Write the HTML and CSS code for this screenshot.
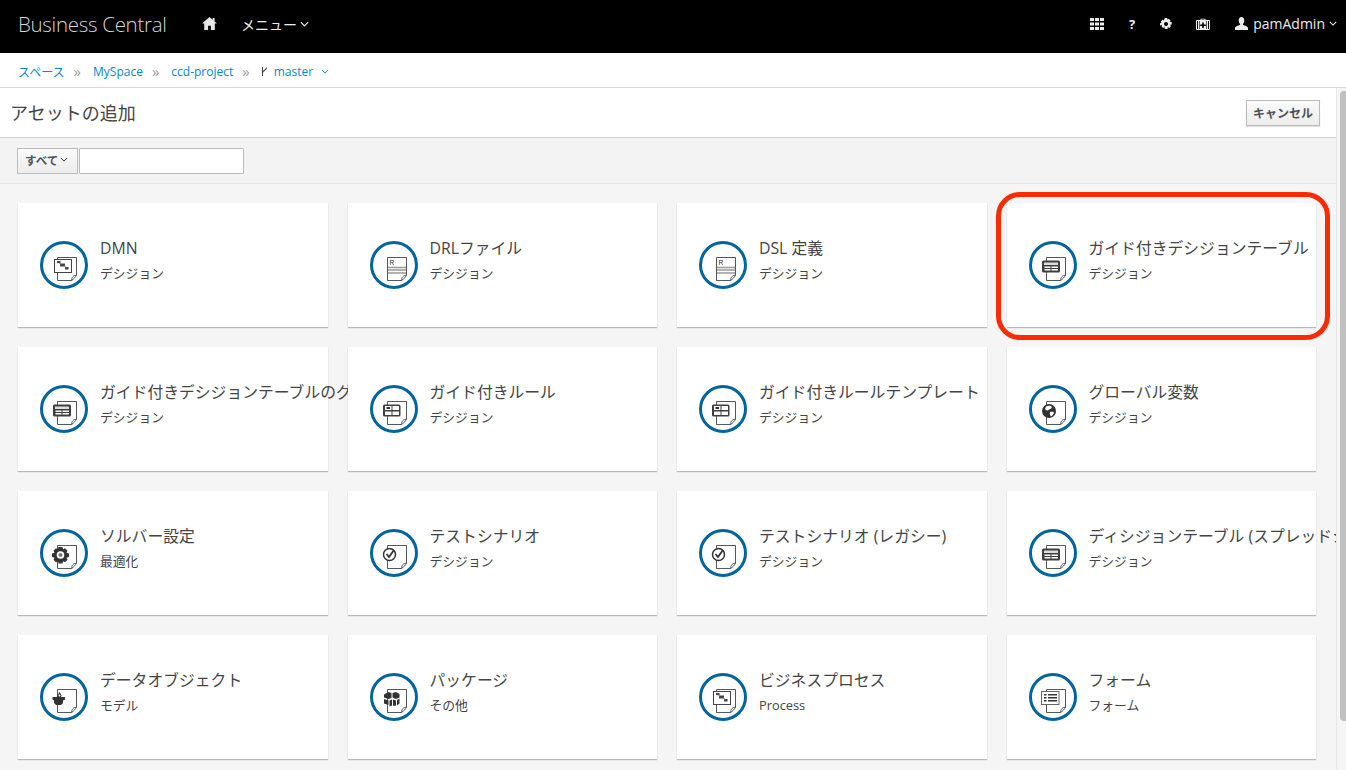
FILE: index.html
```html
<!DOCTYPE html>
<html lang="ja">
<head>
<meta charset="utf-8">
<title>Business Central</title>
<link rel="stylesheet" href="styles.css">
</head>
<body>
<svg class="defs" width="0" height="0" aria-hidden="true">
  <defs>
    <symbol id="doc" viewBox="0 0 48 48">
      <circle cx="24" cy="24" r="22.5" fill="#fff" stroke="#00659c" stroke-width="3"/>
      <path d="M17.500 16.500H36.500V34L31.500 39.500H17.500Z" fill="#fff" stroke="#555" stroke-width="1"/>
      <path d="M31.500 39.500C31.800 36.500 32.800 34.500 36.500 34.200C35.500 36 34 38 31.500 39.500Z" fill="#fff" stroke="#555" stroke-width="1"/>
    </symbol>
    <symbol id="i-flow" viewBox="0 0 48 48">
      <use href="#doc"/>
      <rect x="14.500" y="18.500" width="17" height="13" fill="#fff" stroke="#444"/>
      <path d="M17 20h3.500v2H17zM20 22.500h5v3h-5zM25 26h3.500v2.500H25z" fill="#444"/>
      <path d="M19 22l2 1M24.500 25l2 1.500" stroke="#888" stroke-width="1"/>
    </symbol>
    <symbol id="i-rule" viewBox="0 0 48 48">
      <use href="#doc"/>
      <text x="19.500" y="23.500" class="rmark">R</text>
      <path d="M18 26.500h18M18 29h18M18 32h18" stroke="#999" stroke-width="1.500"/>
    </symbol>
    <symbol id="i-table" viewBox="0 0 48 48">
      <use href="#doc"/>
      <rect x="13" y="19.500" width="18" height="12" rx="1.500" fill="#3f3f3f"/>
      <rect x="15" y="21.500" width="14" height="2.500" fill="#ddd"/>
      <path d="M15.500 25.500h6V27h-6zM22.500 25.500h6.500V27h-6.500zM15.500 28h6v1.500h-6zM22.500 28h6.500v1.500h-6.500z" fill="#fff"/>
    </symbol>
    <symbol id="i-guided" viewBox="0 0 48 48">
      <use href="#doc"/>
      <rect x="13" y="19.500" width="17.500" height="12" rx="1.500" fill="#3f3f3f"/>
      <path d="M15 21h6.500v4h-6.500zM22.500 21h6.500v4h-6.500zM15 26.500h6.500v3.500h-6.500zM22.500 26.500h6.500v3.500h-6.500z" fill="#fff"/>
      <path d="M16.500 22h3.500v2h-3.500z" fill="#333"/>
    </symbol>
    <symbol id="i-globe" viewBox="0 0 48 48">
      <use href="#doc"/>
      <circle cx="20" cy="26" r="7" fill="#333"/>
      <path d="M17 21.500c2-1 5-1 6 .5c-1 1.500-1 2-3 2.500c-1 1.500-3 1-4-.5zM21 27c2-.5 4 0 4 1c-1 2-2 3-3 3.500c-1-1-1.500-3-1-4.500z" fill="#fff"/>
    </symbol>
    <symbol id="i-gear" viewBox="0 0 48 48">
      <use href="#doc"/>
      <path d="M18.500 18h4l.5 2.200 2-.9 2.500 2.500-1 2 2.500.7v3.500l-2.500.7 1 2-2.500 2.500-2-1-.5 2.300h-4l-.5-2.300-2 1-2.500-2.500 1-2-2.500-.7V24.500l2.500-.7-1-2 2.500-2.500 2 .9z" fill="#333"/>
      <circle cx="20.500" cy="26" r="3.800" fill="#fff"/>
      <circle cx="20.500" cy="26" r="2" fill="#777"/>
    </symbol>
    <symbol id="i-check" viewBox="0 0 48 48">
      <use href="#doc"/>
      <circle cx="19.500" cy="25.500" r="6" fill="#fff" stroke="#333" stroke-width="1.500"/>
      <path d="M16.500 25l2.500 3 5-7" fill="none" stroke="#333" stroke-width="1.800"/>
    </symbol>
    <symbol id="i-data" viewBox="0 0 48 48">
      <use href="#doc"/>
      <path d="M19.500 19l2.200 3.500-.8 1.500h4.100v2.500l-2 1v2.500l-2 2h-5l-2-2V27.500l-1.500-1V24h4.200l.8-1.500z" fill="#333"/>
      <circle cx="19.500" cy="22.500" r="1" fill="#fff"/>
    </symbol>
    <symbol id="i-pack" viewBox="0 0 48 48">
      <use href="#doc"/>
      <path d="M14 21.500l4.500-2.500 3 1v5l-3 1-4.500-1.500zM22.500 20l3.500-1 3.500 2v3.500l-3.500 1.500-3.500-1.500zM14 26l4.500 1.500v4.500l-4.500-1.500zM19.500 27.500l2.500-1v6l-2.500 1zM23 26.500l3 1v5l-3 .5zM27 27l2.500-1.500v5l-2.500 2z" fill="#333"/>
    </symbol>
    <symbol id="i-form" viewBox="0 0 48 48">
      <use href="#doc"/>
      <rect x="12.500" y="18.500" width="17.500" height="13" fill="#fff" stroke="#666"/>
      <path d="M19 21h9v1.500h-9zM19 24h9v1.500h-9zM19 27h9v1.500h-9zM15 21h2.500v1.500H15zM15 24h2.500v1.500H15zM15 27h2.500v1.500H15z" fill="#333"/>
    </symbol>
  </defs>
</svg>

<div class="page">
  <nav class="topnav">
    <span class="brand">Business Central</span>
    <svg class="home" viewBox="0 0 16 14" width="15" height="13"><path d="M8 0L0 7h2.300v7h4.200V9.500h3V14h4.200V7H16L13.500 4.800V1h-2v2z" fill="#e6e6e6"/></svg>
    <span class="menu">メニュー<svg class="chev" viewBox="0 0 10 6" width="9" height="6"><path d="M1 1l4 4 4-4" fill="none" stroke="currentColor" stroke-width="1.300"/></svg></span>
    <div class="nav-right">
      <svg class="nav-ic ic-grid" viewBox="0 0 14 12" width="14" height="12"><path d="M0 0h4v3H0zM5 0h4v3H5zM10 0h4v3h-4zM0 4.500h4v3H0zM5 4.500h4v3H5zM10 4.500h4v3h-4zM0 9h4v3H0zM5 9h4v3H5zM10 9h4v3h-4z" fill="#ececec"/></svg>
      <span class="help">?</span>
      <svg class="nav-ic ic-cog" viewBox="0 0 12 12" width="12" height="12"><path d="M4.800 0h2.400l.3 1.500 1.300-.8 1.700 1.700-.8 1.300 2 .3v2.400l-1.600.4.800 1.400-1.700 1.700-1.400-.8-.3 1.900H4.800l-.4-1.900-1.300.8-1.700-1.700.8-1.400L0 7.600V5.200l1.600-.4-.8-1.300 1.700-1.700 1.300.8z" fill="#ececec" fill-rule="evenodd"/><circle cx="6" cy="6" r="2" fill="#000"/></svg>
      <svg class="nav-ic ic-case" viewBox="0 0 14 12" width="14" height="12"><path d="M4.500 2V.8h5V2H13a1 1 0 011 1v8a1 1 0 01-1 1H1a1 1 0 01-1-1V3a1 1 0 011-1zM5.500 2h3v-.5h-3z" fill="#ececec" fill-rule="evenodd"/><path d="M1 3h1v8H1zM12 3h1v8h-1zM3 3h.6v8H3zM10.400 3h.6v8h-.6z" fill="#000"/><path d="M6.200 4.500h1.600v2h2V8h-2v2H6.200V8h-2V6.500h2z" fill="#000"/></svg>
      <span class="user">
        <svg viewBox="0 0 13 13" width="13" height="13"><path d="M6.500 0C8.300 0 9.300 1.300 9.300 3.200C9.300 5 8.500 6.500 7.800 7.200C7.800 8.300 13 9 13 11V13H0V11C0 9 5.200 8.300 5.200 7.200C4.500 6.500 3.700 5 3.700 3.200C3.700 1.300 4.700 0 6.500 0Z" fill="#ececec"/></svg>
        <span>pamAdmin</span>
        <svg class="chev" viewBox="0 0 10 6" width="8" height="5"><path d="M1 1l4 4 4-4" fill="none" stroke="currentColor" stroke-width="1.300"/></svg>
      </span>
    </div>
  </nav>

  <div class="crumbs">
    <a>スペース</a><span class="sep">»</span>
    <a>MySpace</a><span class="sep">»</span>
    <a>ccd-project</a><span class="sep">»</span>
    <svg class="branch" viewBox="0 0 7 11" width="7" height="11"><path d="M1.500 1v9M5.500 1.500C5.500 4.500 1.500 4.500 1.500 7" fill="none" stroke="#444" stroke-width="1.100"/></svg>
    <a class="branch-name">master</a>
    <svg class="crumb-chev" viewBox="0 0 10 6" width="8" height="5"><path d="M1 1l4 4 4-4" fill="none" stroke="#0088ce" stroke-width="1.200"/></svg>
  </div>

  <div class="workspace">
    <main class="content">
      <header class="title-bar">
        <h1>アセットの追加</h1>
        <button class="btn cancel">キャンセル</button>
      </header>
      <div class="toolbar">
        <button class="btn filter">すべて<svg viewBox="0 0 10 6" width="8" height="5"><path d="M1 1l4 4 4-4" fill="none" stroke="#333" stroke-width="1.200"/></svg></button>
        <input class="search" type="text">
      </div>
      <div class="grid">
        <article class="card"><svg class="ic"><use href="#i-flow"/></svg><div class="txt"><h2>DMN</h2><p>デシジョン</p></div></article>
        <article class="card"><svg class="ic"><use href="#i-rule"/></svg><div class="txt"><h2>DRLファイル</h2><p>デシジョン</p></div></article>
        <article class="card"><svg class="ic"><use href="#i-rule"/></svg><div class="txt"><h2>DSL 定義</h2><p>デシジョン</p></div></article>
        <article class="card"><svg class="ic"><use href="#i-table"/></svg><div class="txt"><h2>ガイド付きデシジョンテーブル</h2><p>デシジョン</p></div><div class="highlight"></div></article>
        <article class="card"><svg class="ic"><use href="#i-table"/></svg><div class="txt"><h2>ガイド付きデシジョンテーブルのグラフ</h2><p>デシジョン</p></div></article>
        <article class="card"><svg class="ic"><use href="#i-guided"/></svg><div class="txt"><h2>ガイド付きルール</h2><p>デシジョン</p></div></article>
        <article class="card"><svg class="ic"><use href="#i-guided"/></svg><div class="txt"><h2>ガイド付きルールテンプレート</h2><p>デシジョン</p></div></article>
        <article class="card"><svg class="ic"><use href="#i-globe"/></svg><div class="txt"><h2>グローバル変数</h2><p>デシジョン</p></div></article>
        <article class="card"><svg class="ic"><use href="#i-gear"/></svg><div class="txt"><h2>ソルバー設定</h2><p>最適化</p></div></article>
        <article class="card"><svg class="ic"><use href="#i-check"/></svg><div class="txt"><h2>テストシナリオ</h2><p>デシジョン</p></div></article>
        <article class="card"><svg class="ic"><use href="#i-check"/></svg><div class="txt"><h2>テストシナリオ (レガシー)</h2><p>デシジョン</p></div></article>
        <article class="card"><svg class="ic"><use href="#i-table"/></svg><div class="txt"><h2>ディシジョンテーブル (スプレッドシート)</h2><p>デシジョン</p></div></article>
        <article class="card"><svg class="ic"><use href="#i-data"/></svg><div class="txt"><h2>データオブジェクト</h2><p>モデル</p></div></article>
        <article class="card"><svg class="ic"><use href="#i-pack"/></svg><div class="txt"><h2>パッケージ</h2><p>その他</p></div></article>
        <article class="card"><svg class="ic"><use href="#i-flow"/></svg><div class="txt"><h2>ビジネスプロセス</h2><p>Process</p></div></article>
        <article class="card"><svg class="ic"><use href="#i-form"/></svg><div class="txt"><h2>フォーム</h2><p>フォーム</p></div></article>
      </div>
    </main>
    <div class="scrollbar"><div class="thumb"></div></div>
  </div>
</div>
</body>
</html>
```

FILE: styles.css
```css
* { box-sizing: border-box; }
html, body { margin: 0; height: 100%; overflow: hidden; }
body {
  font-family: "Open Sans", "Noto Sans CJK JP", sans-serif;
  font-size: 12px;
  color: #363636;
  background: #f5f5f5;
}
.defs { position: absolute; }
.rmark { font: 6.500px "Liberation Sans", sans-serif; fill: #222; }
.page { display: flex; flex-direction: column; height: 770px; }

.topnav {
  flex: 0 0 53px;
  background: #000;
  color: #ececec;
  display: flex;
  align-items: center;
  padding: 0 9px 6px 18px;
}
.brand { font-size: 20.500px; font-weight: 300; color: #d6d6d6; letter-spacing: -0.3px; width: 184px; }
.home { margin-right: 24px; }
.menu { font-size: 14px; display: flex; align-items: center; gap: 2px; }
.chev { margin-left: 1px; }
.nav-right { margin-left: auto; display: flex; align-items: center; }
.nav-ic { display: block; }
.ic-grid { margin-right: 25px; }
.help { font-size: 13px; font-weight: 700; margin-right: 25px; }
.ic-cog { margin-right: 24px; }
.ic-case { margin-right: 25px; }
.user { display: flex; align-items: center; gap: 5px; font-size: 14px; }
.user .chev { margin-left: -1px; }

.crumbs {
  flex: 0 0 35px;
  background: #fff;
  border-bottom: 1px solid #d9d9d9;
  display: flex;
  align-items: center;
  padding: 3px 0 0 18px;
  color: #0088ce;
}
.crumbs a { color: #0088ce; }
.sep { color: #9c9c9c; font-size: 15px; line-height: 15px; margin: 0 12px 0 9px; }
.branch { margin: 0 6px 0 -1px; }
.crumb-chev { margin-left: 8px; }

.workspace { flex: 1; display: flex; min-height: 0; }
.content { flex: 1; min-width: 0; overflow: hidden; }
.scrollbar { flex: 0 0 10px; background: #f5f5f5; border-left: 1px solid #e6e6e6; padding: 3px 0 0 3px; }
.thumb { height: 630px; background: #c1c1c1; border-radius: 4px 0 0 4px; }

.title-bar {
  height: 50px;
  background: #fff;
  border-bottom: 1px solid #d1d1d1;
  display: flex;
  align-items: center;
  justify-content: space-between;
  padding: 0 16px 0 10px;
}
h1 { margin: -2px 0 0; font-size: 18px; font-weight: 400; color: #444; }
.btn {
  font-family: inherit;
  font-weight: 700;
  color: #4d5258;
  border: 1px solid #bbb;
  background: linear-gradient(#fafafa, #ededed);
  padding: 0;
}
.cancel { width: 74px; height: 26px; font-size: 12px; box-shadow: 0 1px 1px rgba(0,0,0,.12); }

.toolbar {
  height: 46px;
  background: #f3f3f3;
  border-bottom: 1px solid #e6e6e6;
  display: flex;
  align-items: center;
  padding: 0 0 0 17px;
  gap: 1px;
}
.filter {
  width: 61px;
  height: 26px;
  font-size: 11.500px;
  display: flex;
  align-items: center;
  justify-content: flex-start;
  padding: 0 0 2px 7px;
  gap: 2px;
}
.search { width: 165px; height: 26px; border: 1px solid #bbb; background: #fff; padding: 0; border-radius: 1px; }

.grid {
  display: grid;
  grid-template-columns: repeat(4, minmax(0, 1fr));
  grid-auto-rows: 124px;
  gap: 20px;
  padding: 19px 20px 0 18px;
}
.card {
  position: relative;
  background: #fff;
  box-shadow: 0 1px 1px rgba(3,3,3,.25);
  display: flex;
  align-items: center;
  padding: 0 0 0 22px;
  gap: 12px;
}
.ic { width: 48px; height: 48px; flex: none; }
.txt { white-space: nowrap; padding-bottom: 13px; }
h2 { margin: 0; font-size: 15.800px; line-height: 24px; font-weight: 400; color: #444; }
.txt p { margin: 4px 0 0; font-size: 12.800px; line-height: 18px; color: #444; }
.highlight {
  position: absolute;
  inset: -11px -14px -13px -11px;
  border: 5px solid #f82c00;
  border-radius: 24px;
  pointer-events: none;
}
```
